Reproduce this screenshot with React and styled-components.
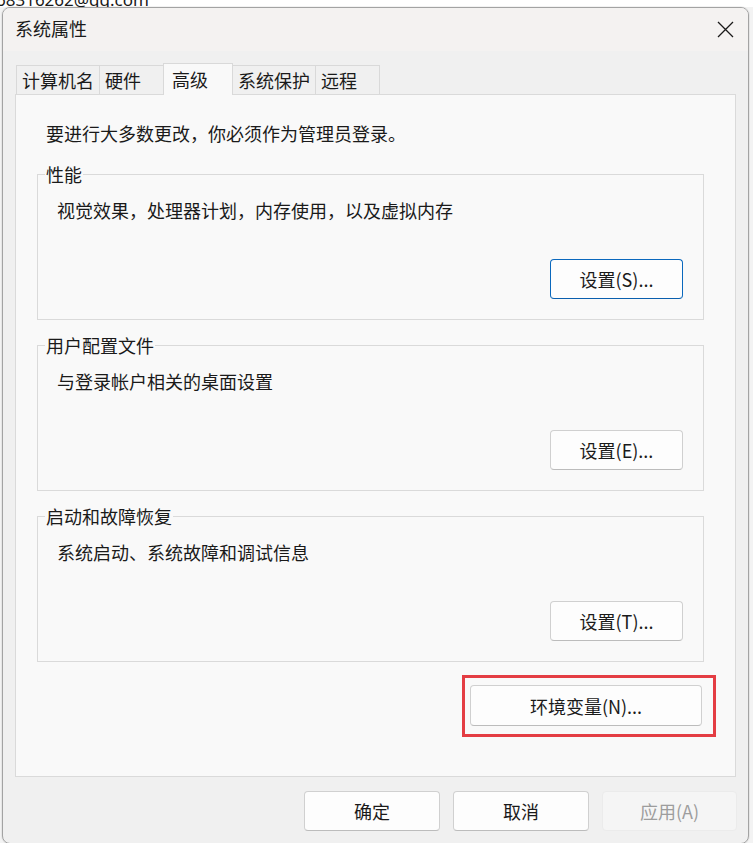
import React from 'react';
import styled, { createGlobalStyle } from 'styled-components';

const Global = createGlobalStyle`
  html, body { margin: 0; padding: 0; background: #f3f3f3; overflow: hidden; }
  body { font-family: "Noto Sans CJK SC", "Noto Sans", sans-serif; color: #1a1a1a; }
  #root { width: 753px; height: 843px; }
`;

const Desktop = styled.div`
  position: relative;
  width: 753px;
  height: 843px;
  overflow: hidden;
  background: #f3f3f3;
`;

const BackdropStrip = styled.div`
  height: 7px;
  overflow: hidden;
  background: #ffffff;
`;

const BackdropText = styled.div`
  font-family: "Noto Sans", sans-serif;
  font-size: 17px;
  line-height: 18px;
  margin-top: -9px;
  margin-left: -4px;
  color: #1a1a1a;
  white-space: nowrap;
`;

const Window = styled.div`
  margin-left: 2px;
  width: 747px;
  box-sizing: border-box;
  border: 1px solid #a3a3a3;
  border-radius: 8px;
  background: #f0f0f0;
  overflow: hidden;
  box-shadow: 0 0 0 1px rgba(0, 0, 0, 0.05);
`;

const TitleBar = styled.div`
  box-sizing: border-box;
  height: 43px;
  display: flex;
  align-items: center;
  justify-content: space-between;
  padding: 0 14px 3px 12px;
  background: #f4f2f1;
`;

const Title = styled.div`
  font-size: 18px;
  line-height: 20px;
  color: #1a1a1a;
`;

const CloseButton = styled.div`
  width: 18px;
  height: 18px;
  margin-top: 2px;
  display: flex;
  align-items: center;
  justify-content: center;
`;

const Content = styled.div`
  padding: 12px 12px 12px 12px;
`;

const TabRow = styled.div`
  display: flex;
  align-items: flex-end;
  height: 31px;
  padding-left: 1px;
`;

const Tab = styled.div`
  position: relative;
  box-sizing: border-box;
  min-width: ${p => (p.$active ? '70px' : '65px')};
  height: ${p => (p.$active ? '32px' : '29px')};
  margin-bottom: ${p => (p.$active ? '-1px' : '0')};
  padding: ${p => (p.$active ? '0 7px 2px 8px' : '0 5px')};
  margin-left: -1px;
  border: 1px solid #d9d9d9;
  border-bottom: none;
  background: ${p => (p.$active ? '#f9f9f9' : '#f0f0f0')};
  z-index: ${p => (p.$active ? 1 : 0)};
  display: flex;
  align-items: center;
  font-size: 18px;
  line-height: 20px;
  color: #1a1a1a;
  white-space: nowrap;
  &:first-child { margin-left: 0; }
`;

const Panel = styled.div`
  box-sizing: border-box;
  height: 683px;
  border: 1px solid #dadada;
  background: #f9f9f9;
  padding: 28px 31px 0 21px;
  display: flex;
  flex-direction: column;
`;

const Intro = styled.div`
  margin-left: 9px;
  font-size: 18px;
  line-height: 20px;
`;

const GroupStack = styled.div`
  margin-top: 31px;
  display: flex;
  flex-direction: column;
  gap: 25px;
`;

const Group = styled.div`
  box-sizing: border-box;
  height: 146px;
  border: 1px solid #dadada;
  display: flex;
  flex-direction: column;
`;

const GroupLabel = styled.div`
  align-self: flex-start;
  margin: -11px 0 0 7px;
  padding: 0 1px;
  background: #f9f9f9;
  font-size: 18px;
  line-height: 20px;
`;

const GroupText = styled.div`
  margin-top: 16px;
  padding-left: 19px;
  font-size: 18px;
  line-height: 20px;
`;

const GroupActions = styled.div`
  margin-top: auto;
  display: flex;
  justify-content: flex-end;
  padding: 0 20px 20px 0;
`;

const Button = styled.button`
  box-sizing: border-box;
  width: ${p => p.$w || 133}px;
  height: ${p => p.$h || 40}px;
  padding: 0;
  border-radius: 4px;
  border: 1px solid ${p => (p.$primary ? '#0a68bd' : '#d0d0d0')};
  border-bottom-color: ${p => (p.$primary ? '#0a5fae' : '#bcbcbc')};
  background: #fdfdfd;
  font-family: "Noto Sans CJK SC", "Noto Sans", sans-serif;
  font-size: 18px;
  line-height: 20px;
  color: #1a1a1a;
  cursor: default;
  &:disabled {
    background: #f5f5f5;
    border-color: #ebebeb;
    color: #9d9d9d;
  }
`;

const EnvRow = styled.div`
  margin-top: 13px;
  margin-right: -12px;
  display: flex;
  justify-content: flex-end;
`;

const Highlight = styled.div`
  border: 3px solid #e43d43;
  padding: 7px 11px 8px 5px;
  display: flex;
`;

const Footer = styled.div`
  margin-top: 14px;
  margin-right: -1px;
  display: flex;
  justify-content: flex-end;
  gap: 13px;
`;

const CloseIcon = () => (
  <svg width="17" height="17" viewBox="0 0 17 17">
    <path d="M1 1 L16 16 M16 1 L1 16" stroke="#1a1a1a" strokeWidth="1.3" fill="none" />
  </svg>
);

const groups = [
  { label: '性能', text: '视觉效果，处理器计划，内存使用，以及虚拟内存', button: '设置(S)...', primary: true },
  { label: '用户配置文件', text: '与登录帐户相关的桌面设置', button: '设置(E)...' },
  { label: '启动和故障恢复', text: '系统启动、系统故障和调试信息', button: '设置(T)...' },
];

const tabs = ['计算机名', '硬件', '高级', '系统保护', '远程'];

export default function App() {
  return (
    <>
      <Global />
      <Desktop>
        <BackdropStrip>
          <BackdropText>68316262@qq.com</BackdropText>
        </BackdropStrip>
        <Window>
          <TitleBar>
            <Title>系统属性</Title>
            <CloseButton><CloseIcon /></CloseButton>
          </TitleBar>
          <Content>
            <TabRow>
              {tabs.map(t => (
                <Tab key={t} $active={t === '高级'}>{t}</Tab>
              ))}
            </TabRow>
            <Panel>
              <Intro>要进行大多数更改，你必须作为管理员登录。</Intro>
              <GroupStack>
                {groups.map(g => (
                  <Group key={g.label}>
                    <GroupLabel>{g.label}</GroupLabel>
                    <GroupText>{g.text}</GroupText>
                    <GroupActions>
                      <Button $primary={g.primary}>{g.button}</Button>
                    </GroupActions>
                  </Group>
                ))}
              </GroupStack>
              <EnvRow>
                <Highlight>
                  <Button $w={232} $h={41}>环境变量(N)...</Button>
                </Highlight>
              </EnvRow>
            </Panel>
            <Footer>
              <Button $w={136}>确定</Button>
              <Button $w={136}>取消</Button>
              <Button $w={135} disabled>应用(A)</Button>
            </Footer>
          </Content>
        </Window>
      </Desktop>
    </>
  );
}
